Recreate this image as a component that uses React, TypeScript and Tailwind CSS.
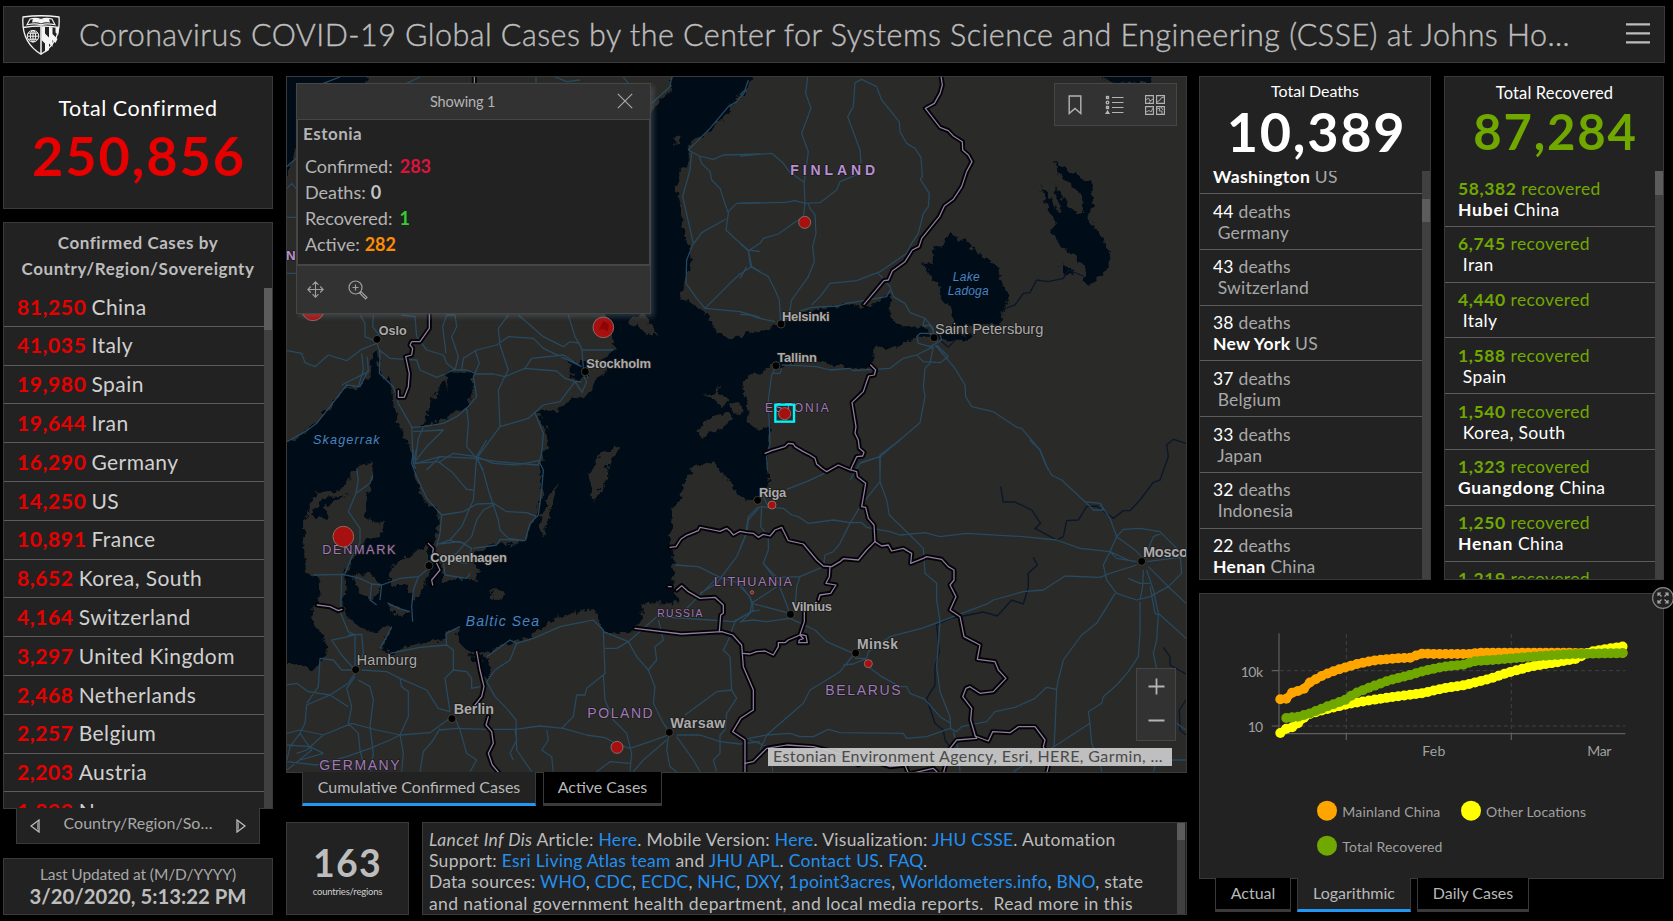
import type { ReactNode } from "react";

const PANEL = "box-border border border-[#3a3a3a] bg-[#222222]";

/* ---------- data ---------- */

const countries: [string, string][] = [
  ["81,250", "China"],
  ["41,035", "Italy"],
  ["19,980", "Spain"],
  ["19,644", "Iran"],
  ["16,290", "Germany"],
  ["14,250", "US"],
  ["10,891", "France"],
  ["8,652", "Korea, South"],
  ["4,164", "Switzerland"],
  ["3,297", "United Kingdom"],
  ["2,468", "Netherlands"],
  ["2,257", "Belgium"],
  ["2,203", "Austria"],
  ["1,899", "Norway"],
];

type Place = { n: string; region?: string; country: string };

const deaths: Place[] = [
  { n: "44", country: "Germany" },
  { n: "43", country: "Switzerland" },
  { n: "38", region: "New York", country: "US" },
  { n: "37", country: "Belgium" },
  { n: "33", country: "Japan" },
  { n: "32", country: "Indonesia" },
  { n: "22", region: "Henan", country: "China" },
];

const recovered: Place[] = [
  { n: "58,382", region: "Hubei", country: "China" },
  { n: "6,745", country: "Iran" },
  { n: "4,440", country: "Italy" },
  { n: "1,588", country: "Spain" },
  { n: "1,540", country: "Korea, South" },
  { n: "1,323", region: "Guangdong", country: "China" },
  { n: "1,250", region: "Henan", country: "China" },
  { n: "1,219", region: "Zhejiang", country: "China" },
];

/* ---------- header ---------- */

function Shield() {
  return (
    <svg className="h-10 w-[38px] shrink-0" viewBox="0 0 38 40">
      <path d="M1 2Q19-.5 37 2Q39 27 19 39.200Q-1 27 1 2Z" fill="#222" stroke="#f4f4f4" strokeWidth="1.300" />
      <path d="M1 12.500Q19 9.500 37 12.500" fill="none" stroke="#f4f4f4" strokeWidth="1.500" />
      <path d="M19 11.500V39" stroke="#f4f4f4" strokeWidth="1.500" />
      <path d="M8 4Q14 2.500 19 4.500Q24 2.500 30 4L33 9.800Q25 8 19 9.800Q13 8 5 9.800Z" fill="#222" stroke="#f4f4f4" strokeWidth="1.100" />
      <path d="M11 3.800Q16 3.300 19 4.800Q22 3.300 27 3.800L28 7.500Q23 6.500 19 8.500Q15 6.500 10 7.500Z" fill="#f4f4f4" />
      <g fill="none" stroke="#f4f4f4" strokeWidth="1">
        <circle cx="11" cy="21.200" r="5.800" />
        <ellipse cx="11" cy="21.200" rx="2.600" ry="5.800" />
        <path d="M11 15.400V27M5.200 21.200H16.800M6.200 18.200H15.800M6.200 24.200H15.800" />
      </g>
      <path
        d="M19.500 12H23V18.500L27 22.500V12L30.500 12.300V19L35.500 24L33.500 28L30.500 25V32L27 28.500V35L23 37.500V28.500L19.500 25Z"
        fill="#f4f4f4"
      />
      <path d="M33.500 12.500L36.800 13L36.300 20L33.500 17.500Z" fill="#f4f4f4" />
    </svg>
  );
}

function Header() {
  return (
    <header className={`${PANEL} flex h-[57px] w-[1662px] items-center pl-[18px] pr-[14px]`}>
      <Shield />
      <h1 className="-mt-px ml-[19px] w-[1500px] shrink-0 whitespace-nowrap text-[30.5px] font-light leading-[40px] tracking-[0.46px] text-[#bdbdbd] [-webkit-text-stroke:0.4px_#bdbdbd]">
        Coronavirus COVID-19 Global Cases by the Center for Systems Science and Engineering (CSSE) at Johns Ho…
      </h1>
      <svg className="-mt-[4px] ml-auto h-6 w-6 shrink-0" viewBox="0 0 24 24">
        <path d="M0 3.300H24M0 12.300H24M0 21.300H24" stroke="#bdbdbd" strokeWidth="2.300" />
      </svg>
    </header>
  );
}

/* ---------- left column ---------- */

function TotalConfirmed() {
  return (
    <section className={`${PANEL} flex h-[133px] flex-col items-center whitespace-nowrap`}>
      <div className="mt-[17px] text-[21.5px] leading-[28px] tracking-[0.55px] text-white">Total Confirmed</div>
      <div className="mt-[2px] pl-[2px] text-[54px] font-bold leading-[64px] tracking-[1.9px] text-[#e60000]">250,856</div>
    </section>
  );
}

function Scrollbar({ offset, thumb }: { offset: string; thumb: string }) {
  return (
    <div className="w-2 shrink-0 bg-[#404040]">
      <div className={`${offset} ${thumb} bg-[#5c5c5c]`} />
    </div>
  );
}

function CountryList() {
  return (
    <section className="flex h-[622px] flex-col items-center">
      <div className={`${PANEL} flex h-[587px] w-full flex-col`}>
        <div className="h-[65px] shrink-0 whitespace-nowrap pt-[7px] text-center text-[17px] font-bold leading-[26px] tracking-[0.55px] text-[#bdbdbd]">
          Confirmed Cases by
          <br />
          Country/Region/Sovereignty
        </div>
        <div className="flex min-h-0 flex-1">
          <ul className="min-w-0 flex-1 overflow-hidden">
            {countries.map(([n, name]) => (
              <li
                key={name}
                className="flex h-[38.8px] items-center gap-[5px] whitespace-nowrap border-b border-[#5c5c5c] pb-[1px] pl-[13px] text-[21px]"
              >
                <b className="font-bold tracking-[0.6px] text-[#e60000]">{n}</b>
                <span className="tracking-[0.45px] text-[#d0d0d0]">{name}</span>
              </li>
            ))}
          </ul>
          <Scrollbar offset="mt-0" thumb="h-[42px]" />
        </div>
      </div>
      <div className="-mt-px flex h-9 w-[244px] items-start justify-between border border-t-0 border-[#3a3a3a] bg-[#222222] px-[13px] pt-[5px]">
        <svg className="mt-[6px] h-[14px] w-[10px]" viewBox="0 0 10 14">
          <path d="M9 1V13L1 7Z" fill="none" stroke="#bdbdbd" strokeWidth="1.300" />
          <path d="M7.500 3.500V10.500" stroke="#8a8a8a" />
        </svg>
        <span className="text-base leading-[20px] text-[#a8a8a8]">Country/Region/So…</span>
        <svg className="mt-[6px] h-[14px] w-[10px]" viewBox="0 0 10 14">
          <path d="M1 1V13L9 7Z" fill="none" stroke="#bdbdbd" strokeWidth="1.300" />
          <path d="M2.500 3.500V10.500" stroke="#8a8a8a" />
        </svg>
      </div>
    </section>
  );
}

function LastUpdated() {
  return (
    <section className={`${PANEL} flex h-[57px] flex-col items-center whitespace-nowrap text-[#bdbdbd]`}>
      <div className="mt-[5px] text-[15.5px] leading-[20px] tracking-[-0.1px] text-[#a8a8a8]">Last Updated at (M/D/YYYY)</div>
      <div className="text-[20.3px] font-bold leading-[24px]">3/20/2020, 5:13:22 PM</div>
    </section>
  );
}

/* ---------- map ---------- */
/* The map is drawn at three units per pixel, in four tiles. */

const land = [
  "M262-30L255 40L200 100L48 235L21 320L-40 400L-40 1150L21 1118L75 1085L110 1060L150 1010L200 950L235 955L265 920L270 870L290 840L300 905L335 940L340 1000L355 1060L385 1130L400 1180L415 1250L440 1300L470 1320L480 1350L470 1400L460 1425L480 1490L490 1535L520 1530L560 1525L590 1530L600 1495L580 1480L590 1450L640 1420L700 1422L740 1410L755 1360L775 1335L785 1260L780 1170L805 1130L800 1085L770 1022L830 1022L880 985L905 985L940 950L960 915L985 900L965 875L1005 840L990 790L975 750L1000 650L1050 400L1115 130L1140 90L1175 60L1180-30Z",
  "M1430-30L1405 50L1370 90L1340 130L1290 180L1230 222L1222 245L1232 280L1200 300L1185 350L1205 410L1215 500L1232 570L1215 640L1200 690L1255 710L1290 740L1300 775L1350 812L1400 790L1450 785L1490 762L1530 750L1580 725L1660 710L1710 702L1750 715L1800 690L1830 672L1825 735L1860 765L1935 768L1960 800L1910 800L1860 825L1810 842L1785 825L1775 890L1750 895L1680 890L1620 872L1570 870L1520 890L1480 880L1450 900L1392 930L1390 960L1405 1010L1405 1060L1440 1085L1470 1065L1465 1150L1460 1190L1468 1250L1430 1285L1395 1290L1360 1260L1350 1230L1310 1195L1305 1170L1235 1195L1207 1245L1200 1290L1175 1320L1172 1410L1180 1450L1180 1530L1192 1600L1085 1600L1085 1650L1065 1680L1040 1690L970 1685L955 1650L945 1617L900 1622L830 1645L790 1670L750 1700L620 1745L570 1750L530 1710L540 1675L500 1680L490 1710L430 1718L380 1730L340 1750L300 1740L320 1700L338 1665L280 1690L240 1672L200 1640L190 1610L200 1560L195 1510L225 1460L250 1415L300 1400L310 1360L255 1350L257 1290L280 1220L275 1175L230 1195L180 1262L110 1270L85 1310L72 1370L74 1510L115 1525L120 1600L90 1630L110 1670L135 1710L140 1750L100 1800L70 1785L-40 1785V2160H2760V-30Z",
  "M330 1490L400 1450L440 1425L450 1500L435 1550L410 1590L375 1545L330 1545Z",
  "M215 1520L270 1510L305 1545L280 1590L235 1565Z",
  "M320 1600L395 1625L350 1640Z",
  "M835 1228L815 1270L778 1345L785 1402L808 1345Z",
  "M1020 1130L965 1150L925 1210L938 1298L960 1260L985 1220L980 1190Z",
  "M640 1550L670 1570L660 1590L635 1580Z",
  "M1262 973L1295 975L1308 948L1320 972L1345 985L1320 1012L1300 985Z",
  "M1250 1080L1290 1040L1345 1028L1360 1045L1320 1080L1265 1102Z",
  "M1352 1000L1382 1000L1385 1032L1358 1030Z",
  "M1276 1105L1258 1138L1268 1120Z",
  "M1045 745L1090 730L1110 760L1132 790L1105 795L1080 775L1050 765Z",
  "M1180 200L1205 195L1200 222L1182 220Z",
  "M405 1470L420 1480L410 1500Z",
];

const water = [
  "M497 905L580 905L578 960L565 1010L500 1045L430 1072L445 1000L470 970L493 930L508 975Z",
  "M865 870L920 880L925 920L880 930Z",
  "M2010 485L2040 510L2060 508L2090 550L2150 590L2165 640L2192 685L2168 720L2165 760L2020 770L2010 710L1985 690L1980 650L1955 620L1925 580L1958 585L1960 530L1985 533Z",
  "M1960 790L2075 795L2070 810L1965 808Z",
  "M2320 275L2370 300L2438 345L2438 395L2425 445L2465 500L2490 545L2488 590L2450 625L2430 648L2408 635L2415 590L2385 555L2340 525L2308 475L2335 465L2310 430L2295 380L2278 348L2300 370L2330 420L2345 425L2320 340L2350 385L2390 430L2410 425L2415 390L2385 350L2345 320Z",
  "M2345 585L2385 600L2375 615L2350 610Z",
  "M2445 10L2615 10L2615 38L2500 38Z",
  "M90 1330L130 1285L205 1275L150 1295L110 1345Z",
  "M120 1310L145 1330L140 1355L120 1340Z",
  "M565 1760L610 1755L635 1800L620 1830L600 1790Z",
];

const rivers = [
  "M2175 716L2205 705L2230 670L2250 668L2270 630L2305 635L2350 625L2365 600L2410 618",
  "M2718 1120L2680 1108L2660 1125L2665 1160L2640 1230L2620 1237L2580 1290L2550 1322L2530 1322L2500 1345L2450 1308L2420 1310L2395 1350L2360 1352L2350 1400L2330 1410L2265 1375L2282 1360L2255 1320L2205 1296L2170 1296L2162 1250",
  "M2260 1462L2272 1485L2245 1510L2245 1550L2230 1602L2195 1590L2152 1638L2110 1626L2050 1638L2010 1645L1970 1665L1978 1745L1965 1790L1965 1845L1940 1885L1965 1960L1990 1980L1995 2010L2030 2060",
  "M1980 810L2005 832L2030 805",
  "M2650 1732L2670 1760L2670 1785L2718 1812M2718 1890L2698 1920L2700 1980L2718 1995",
];

/* Roads, one path per tile. */
const roadsNW =
  "M21 442H50M21 610H50M21 842L65 850L75 878L105 890L145 855L200 872L245 838L290 820M240 735L255 760L255 800L290 815L300 850L298 910L340 950L355 1000L395 1070L400 1180L408 1198M280 735L278 770L300 800M365 735L405 740L410 800L440 840L490 855M490 855L500 880L525 900L535 860L515 800L530 770L525 735M525 735L500 735L488 770L498 850M298 840L330 865L410 870L420 900L470 922L495 912L520 900M520 900L560 900L590 912L640 912L675 920L735 895L830 903L855 925L885 935L905 965M545 900L550 865L590 840L650 825L685 800L760 805L790 835L905 890M685 735L655 775L660 825L685 900L672 925L655 960L660 1070L590 1165L480 1160L400 1182M585 840L598 880L580 920L590 980L560 1015L530 1040L490 1060L430 1070L395 1072M715 735L750 765L790 800L850 830L870 815L900 820M735 895L755 865L850 855L905 890M865 735L885 800L905 835L910 890M905 840H1000M560 1015L565 1060L560 1130L590 1165M660 1070L745 1045L790 1005L840 995L885 935L905 935M765 1030L790 1090L785 1150L775 1185L650 1175L590 1165M590 1165L610 1200M430 1072L415 1105L405 1180M400 1085L490 1080L440 1130L405 1175M480 1160L440 1200M185 945L265 905L262 860M245 850L250 900L235 950M130 40L180 21M380 40L420 21M768 21V40M825 21L860 35L900 30M1030 21L1045 40M1115 100L1170 50L1175 21M1225 240L1265 200L1290 175L1345 110L1370 95L1400 60M1225 240L1258 258L1300 268L1330 255L1440 252M1235 245L1230 300L1208 380L1240 520L1220 570L1218 640L1250 685L1275 715L1380 725L1440 742M1258 258L1265 280L1290 305L1295 330L1320 355L1345 430L1338 480L1370 510L1405 540L1415 590L1440 605M1440 398L1370 400L1345 425M1338 447L1265 488L1242 520M1415 590L1380 612L1350 640L1275 715M1405 540L1440 545M21 355L35 340L48 355M21 290L48 265M905 905L920 935L905 970M910 890L925 925M21 1115L75 1085L110 1060L150 1010L200 945L240 950L265 900";

const roadsNE =
  "M203 21L197 70L213 115L185 190L205 245L192 340L195 400M0 258L95 250L130 280L148 305L190 335M0 400L135 397L165 392L195 400L240 398L290 360L300 335L360 310M365 28L345 38L340 110L323 140L360 240L363 280M365 28L410 50L425 90L478 155L480 185L500 220L525 235L543 262L547 320L541 328L568 370L565 410L550 430L535 490L515 520L500 550L420 605L350 632L270 640L240 680L215 705M195 400L190 440L160 460L115 492L70 505L60 520L25 542L0 520M25 542L32 590L85 620L105 660L118 690L122 760M205 400L210 415L225 435L228 490L218 530L223 575L205 620L155 690L147 735L125 760M0 625L20 590M0 733L30 735L50 743L105 755M175 725L215 712L295 708L320 700L440 680L450 660M415 610L450 650L460 680L495 700L510 728L555 745L580 775L582 800M125 885L180 887L230 890L270 900L330 895L340 902L450 895L490 865L530 855L580 830M580 830L570 880L555 895L550 950L555 980L540 1058L420 1160L360 1178M420 1160V1200M585 825L620 865L645 895L675 945L677 980L695 1010L760 1025L830 1072L845 1075L900 1140L925 1200M530 855L550 875L600 878L625 860L590 825M530 800L535 820L570 830L605 810L600 795M530 800L540 790L585 790M550 768L570 765L580 785M108 890L95 915L85 990L90 1120L80 1160L82 1200M125 895L120 910L100 910M0 75L15 60L25 30M555 745L548 768";

const roadsSW =
  "M400 30L395 70L410 110L440 175L485 225L480 280L470 320M400 70L480 65L520 40L590 50L640 70L710 75L775 62M590 50L580 180L545 260L510 300L475 312M620 0L590 50L610 95L625 150L640 195L610 210L590 240L575 290L555 310L500 300M410 25L400 65M475 65L515 95L560 148L580 150M485 225L550 215L590 192L640 190L680 215L740 218L770 230M640 195L655 240L660 270L685 295L735 302M580 325L650 315L660 298L735 302L750 250L775 225L785 150L790 90L775 60M475 312L540 305L575 325L560 370L490 360M490 360L495 405L560 415L570 400M555 310L530 340L500 355M230 85L235 120L228 160L205 215L240 265L240 310L220 340L195 400M278 105L270 130L228 160M100 405L190 403L240 415L275 432L305 435L360 415L415 410L440 390M185 403L182 520L205 575L225 585L225 690M275 432L270 480L290 495M305 435L300 480M415 410L400 450L395 500L398 545M325 490L355 505L390 515M225 585L180 595L155 600L185 645L225 690M205 585L245 583L250 640L230 690M225 700L205 730L150 765L80 795L75 850L60 880L30 920L21 960M225 710L200 745L215 800L205 850L235 880L240 930L255 990M235 720L270 740L280 780L270 860L280 940L270 995M245 690L320 695L360 715L440 750L475 805L510 815M120 655L115 740L80 790M21 735L50 730L85 755L150 765L205 800M21 880L60 870L130 885L215 850L290 870L360 885L450 878L510 835M120 655L160 660L185 690L225 690M360 715L365 740L385 755L385 830L360 885L370 940L365 995M480 870L530 865L620 868L705 868L780 858L850 865L920 885L975 893L1010 912L1050 925L1110 905L1165 885M705 868L710 900L690 940L700 960M300 625L320 590L335 560M330 640L420 622L500 615L520 630L520 690L495 715L510 815M520 690L560 695L575 715L575 745L600 740M480 865L460 900L430 935L420 995M500 615L498 580L540 560M525 835L540 870L560 940L590 960L570 995M620 725L645 770L680 805L708 840L710 930L755 995M620 725L645 690L690 660L710 610L760 595L840 560L900 548L940 540L970 570L975 700L970 705L975 780L1000 840L1040 880L1055 940L1050 995M710 610L690 600L620 650M970 575L1045 605L1070 650L1105 690L1125 740L1120 790L1150 850L1165 870M970 705L920 745L915 765L890 765L880 830L845 865M1045 605L1130 530M975 625L1010 625L1045 605M1135 530L1290 540L1360 545L1415 515L1440 510M1135 540L1150 600L1125 620L1130 660L1105 690M1165 890L1160 930L1170 980L1190 995M1160 900L1090 960L1060 995M1190 890L1240 960L1260 995M1190 885H1260L1320 905L1380 912L1440 905M1215 825L1310 755L1355 750L1350 650L1330 630L1345 600L1365 545M1355 750L1370 775L1340 820L1335 870L1320 885L1320 940L1300 960L1310 995M800 870L805 900L785 930L815 950L820 995M950 995L990 965L1050 970M1185 375L1255 380L1315 410L1220 505M1440 200L1405 240L1400 280L1370 350L1310 430L1260 460M1315 410L1380 430L1415 480L1420 510L1365 545M60 880L95 930L21 990M21 965L110 975L200 950L270 925L330 900L360 885M130 885L80 930L50 940M21 915L90 920L130 940L60 960";

const roadsSE =
  "M85 200L65 160M65 200L62 260L85 290L85 330L70 370L115 430L150 520M55 200L25 230L15 290L0 325M60 200L130 205L155 225L175 230L205 250L280 240L330 248L365 248L380 262L450 275L480 285L555 278L600 290L680 280L850 290L950 300L1020 325L1110 335L1165 360M140 148L200 125L265 95M330 120L360 70L425 48M480 0L420 45V125L360 200L330 250L300 310L280 335L255 345L250 380L180 410L110 412L70 370M180 410L170 440L165 510M420 125L440 180L448 225L510 285L550 325L555 400L590 430L590 480L600 545L590 680L600 755L630 830L632 865M0 440L30 470L35 490L150 520M35 490L110 440M35 490L30 520L0 548M0 545L40 540L80 545L150 535L225 570L260 605L340 640M385 635L450 590L545 565L600 545L640 530L745 490L760 480L850 455L910 450L975 408L1080 412L1110 400L1190 375M340 645L300 695L210 750L190 790L80 885L60 930M345 655L375 655L385 680L425 710L480 740L500 740L510 760L555 778L600 830L632 850M310 675L340 672L380 655L385 635M0 900L80 885L150 880L180 890L220 890L265 868L300 878L490 880L500 895L560 890L630 865M28 900L100 925M630 865L650 875L665 860L740 845L765 815L825 802L885 775L920 742L950 748M1125 460L1070 550L1025 585L970 660L955 720L950 745L945 870L942 920L820 995M1200 485V580L1195 650L1165 695L1130 735L1090 770L1085 790L1045 815L1050 850L1055 910L1080 970L1085 995M942 920L1050 850M1230 440L1245 520L1255 525L1250 600L1240 640L1250 685M870 0L900 30L915 70L935 105L965 120L1035 185L1080 190L1110 235L1130 290L1185 330L1205 350M1035 185L1060 210L1090 210L1080 190M1130 290L1150 268L1200 265L1260 275L1320 335L1325 400L1285 440L1230 470L1190 480L1130 460L1100 420L1090 375L1110 335L1130 290M1215 350L1240 290L1265 280M1220 365L1338 350M1225 380L1285 440L1338 490M1210 390L1208 440L1200 480M1220 390L1240 450L1255 520L1338 595M1165 415L1200 430H1230M1190 365L1130 355L1110 335M1240 995L1250 960H1338M1310 850L1338 870M640 875L655 930L660 995M95 960L98 995";

const borders = [
  "M583 0V42M448 732L448 775L420 815L395 815L390 825L398 835L395 855L377 860L388 910L385 950L373 982H355V962",
  "M1983 18L1987 45L1980 70L1963 100L1936 115L1980 172L2005 182L2020 198L2047 215L2048 240L2065 255L2076 275L2060 305L2045 350L2020 388L1993 408L1978 440L1925 505L1917 530L1897 540L1875 575L1837 603L1825 630L1812 632L1752 703",
  "M1772 885L1787 900L1783 915L1766 918L1750 965L1716 998L1728 1070L1725 1090L1735 1110L1738 1135L1752 1147L1748 1158L1730 1160L1715 1192L1712 1200L1730 1205L1732 1220L1757 1240L1752 1270L1745 1310L1757 1312L1765 1345L1782 1365L1785 1415L1760 1440L1735 1470L1690 1466L1680 1475L1655 1490L1630 1488L1610 1470L1570 1422L1525 1412L1505 1372L1485 1380L1470 1398L1450 1393L1435 1402L1420 1390L1400 1388L1380 1384L1360 1395L1350 1383L1340 1375L1320 1384L1300 1380L1260 1372L1255 1382L1218 1397L1203 1407L1188 1430L1170 1432",
  "M1455 1150L1475 1142L1515 1130L1525 1120L1540 1122L1545 1130L1570 1145L1590 1155L1605 1165L1610 1182L1625 1195L1640 1205L1675 1185L1710 1200",
  "M1785 1415L1805 1428L1825 1425L1835 1443L1870 1435L1895 1450L1892 1480L1930 1465L1940 1460L1985 1468L2005 1490L2022 1500L2022 1530L2010 1545L2028 1580L2010 1620L2040 1640L2052 1700L2100 1725L2092 1768L2145 1775L2155 1800L2178 1825L2140 1865L2100 1870L2070 1850L2058 1855L2048 1880L2075 1915L2072 1950L2085 1995L2090 2005L2030 2010L2010 2035L1990 2110",
  "M2085 1998L2125 2013L2138 1985L2190 1988L2215 1970L2265 1970L2295 2010L2290 2030L2310 2070L2300 2110",
  "M1650 1490L1648 1520L1638 1540L1668 1545L1652 1570L1620 1575L1615 1590M1573 1625V1655L1560 1693L1578 1697L1582 1718H1556L1558 1710L1570 1706L1560 1695L1525 1710L1515 1718L1495 1718L1495 1730L1480 1755L1455 1743L1430 1745L1410 1752L1388 1750",
  "M1065 1675L1205 1692L1325 1685L1358 1695L1385 1725L1390 1790L1420 1860V1920L1382 1945L1358 1985L1395 2010L1395 2110",
  "M1190 1560L1205 1547L1225 1565L1260 1585L1305 1582L1330 1605V1630L1322 1635L1318 1685M1165 1550H1174",
  "M1395 2080L1420 2075L1440 2055L1460 2035L1520 2025L1600 2030L1640 2040L1690 2055L1735 2085L1750 2075L1800 2080L1830 2090L1875 2085L1885 2110M1895 2110L1960 2095L1975 2110",
  "M590 1745L600 1800L612 1850L605 1880L585 1905M625 1940L618 1965L635 1985L640 2020L625 2050L637 2085L658 2110",
  "M445 1420L460 1435L458 1450M470 1480L480 1500L455 1530L458 1545",
  "M112 1605L150 1610L175 1622L186 1618",
];

type Label = { t: string; x: number; y: number; w: number; s: number; k: "city" | "light" | "country" | "land" | "sea" };
const labels: Label[] = [
  { t: "Oslo", x: 296, y: 796, w: 84, s: 38, k: "city" },
  { t: "Stockholm", x: 919, y: 893, w: 194, s: 39, k: "city" },
  { t: "Helsinki", x: 1506, y: 752, w: 143, s: 39, k: "city" },
  { t: "Tallinn", x: 1492, y: 876, w: 119, s: 39, k: "city" },
  { t: "Saint Petersburg", x: 1965, y: 791, w: 325, s: 44, k: "light" },
  { t: "Riga", x: 1437, y: 1280, w: 82, s: 39, k: "city" },
  { t: "Vilnius", x: 1535, y: 1622, w: 121, s: 39, k: "city" },
  { t: "Minsk", x: 1731, y: 1736, w: 123, s: 42, k: "city" },
  { t: "Moscow", x: 2589, y: 1461, w: 168, s: 44, k: "city" },
  { t: "Copenhagen", x: 451, y: 1475, w: 230, s: 39, k: "city" },
  { t: "Hamburg", x: 230, y: 1785, w: 181, s: 43, k: "light" },
  { t: "Berlin", x: 521, y: 1933, w: 121, s: 43, k: "city" },
  { t: "Warsaw", x: 1171, y: 1974, w: 165, s: 43, k: "city" },
  { t: "FINLAND", x: 1531, y: 315, w: 254, s: 42, k: "land" },
  { t: "N", x: 18, y: 570, w: 28, s: 40, k: "land" },
  { t: "ESTONIA", x: 1455, y: 1026, w: 191, s: 36, k: "country" },
  { t: "DENMARK", x: 127, y: 1452, w: 219, s: 38, k: "country" },
  { t: "LITHUANIA", x: 1302, y: 1547, w: 234, s: 38, k: "country" },
  { t: "RUSSIA", x: 1132, y: 1641, w: 135, s: 31, k: "country" },
  { t: "POLAND", x: 922, y: 1943, w: 196, s: 42, k: "country" },
  { t: "BELARUS", x: 1636, y: 1875, w: 226, s: 42, k: "country" },
  { t: "GERMANY", x: 118, y: 2101, w: 241, s: 42, k: "country" },
  { t: "Skagerrak", x: 99, y: 1121, w: 200, s: 38, k: "sea" },
  { t: "Baltic Sea", x: 557, y: 1667, w: 220, s: 42, k: "sea" },
  { t: "Lake", x: 2018, y: 633, w: 81, s: 36, k: "sea" },
  { t: "Ladoga", x: 2003, y: 675, w: 123, s: 36, k: "sea" },
];
const labelClass = {
  city: "fill-[#ababab] font-bold",
  light: "fill-[#ababab]",
  country: "fill-[#a179b8]",
  land: "fill-[#b98fd6] font-bold",
  sea: "fill-[#4a83c0] italic",
};

const cities: [number, number][] = [
  [291, 808], [916, 905], [1503, 762], [1488, 887], [1962, 803], [1433, 1291], [1531, 1633],
  [1727, 1749], [2585, 1474], [447, 1487], [227, 1799], [516, 1946], [1168, 1987],
];
const cases: [number, number, number][] = [
  [99, 718, 34], [970, 772, 31], [190, 1400, 31], [1574, 457, 18], [1514, 1031, 18],
  [1476, 1305, 12], [1416, 1567, 5], [1765, 1781, 12], [1011, 2032, 18],
];

function BaseMap() {
  return (
    <svg className="block h-full w-full bg-[#000c17]" viewBox="21 21 2697 2085" preserveAspectRatio="none">
      <defs>
        <filter id="coast" x="-5%" y="-5%" width="110%" height="110%" colorInterpolationFilters="sRGB">
          <feTurbulence type="fractalNoise" baseFrequency="0.05" numOctaves="3" seed="4" />
          <feDisplacementMap in="SourceGraphic" scale="28" xChannelSelector="R" yChannelSelector="G" />
        </filter>
      </defs>
      <g filter="url(#coast)">
        {land.map((d) => <path key={d} d={d} fill="#2a2a28" />)}
        {water.map((d) => <path key={d} d={d} fill="#000c17" />)}
      </g>
      <g fill="none" stroke="#0a172b" strokeWidth="4">
        {rivers.map((d) => <path key={d} d={d} />)}
      </g>
      <g fill="none" stroke="#274a61" strokeWidth="3.800" strokeLinejoin="round">
        <path d={roadsNW} />
        <path d={roadsNE} transform="translate(1380 0)" />
        <path d={roadsSW} transform="translate(0 1110)" />
        <path d={roadsSE} transform="translate(1380 1110)" />
      </g>
      <g fill="none" strokeLinejoin="round" strokeLinecap="round">
        {borders.map((d) => <path key={d} d={d} stroke="#030303" strokeWidth="15" />)}
        {borders.map((d) => <path key={d} d={d} stroke="#917ca6" strokeWidth="3.800" />)}
      </g>
      {cities.map(([x, y]) => (
        <circle key={x} cx={x} cy={y} r="12" fill="#000" stroke="#55554a" strokeWidth="2" />
      ))}
      <g className="font-['Liberation_Sans',sans-serif]" stroke="#1c1c1c" strokeWidth="5" paintOrder="stroke" strokeLinejoin="round">
        {labels.map((l) => (
          <text
            key={l.t}
            x={l.x}
            y={l.y}
            textLength={l.w}
            fontSize={l.s}
            className={labelClass[l.k]}
            stroke={l.k === "sea" ? "none" : undefined}
          >
            {l.t}
          </text>
        ))}
      </g>
      {cases.map(([x, y, r]) => (
        <circle key={x} cx={x} cy={y} r={r} fill="#a80f0f" stroke="#8b6a66" strokeWidth="3" />
      ))}
      <path d="M970 754L986 762L984 784L966 776L956 780Z" fill="#8d0505" />
      <rect x="1486" y="1004" width="56" height="51" fill="none" stroke="#00f4fa" strokeWidth="7" />
    </svg>
  );
}

function Popup() {
  const rows: [string, string, string, string][] = [
    ["Confirmed:", "283", "text-[#dc143c]", "gap-[7px]"],
    ["Deaths:", "0", "text-[#c4c4c4]", "gap-[5px]"],
    ["Recovered:", "1", "text-[#32cd32]", "gap-[7px]"],
    ["Active:", "282", "text-[#ff8c00]", "gap-[5px]"],
  ];
  return (
    <div className="absolute left-[9px] top-[6px] flex h-[231px] w-[355px] flex-col border border-[#464646] bg-[#323232] shadow-[3px_3px_5px_rgba(110,120,130,0.35)]">
      <div className="relative flex h-[35px] shrink-0 items-center pl-[133px] text-[14.5px] tracking-[-0.15px] text-[#b4b4b4]">
        Showing 1
        <svg className="absolute left-[320px] top-[9px] h-4 w-4" viewBox="0 0 16 16">
          <path d="M.8.8L15.200 15.200M15.200.8L.8 15.200" stroke="#a8a8a8" strokeWidth="1.200" />
        </svg>
      </div>
      <div className="h-[147px] shrink-0 border border-b-2 border-[#464646] bg-[#222222] text-[#b4b4b4]">
        <div className="pl-[5px] pt-[2px] text-[17px] font-bold leading-[24px] tracking-[0.5px]">Estonia</div>
        <div className="mt-[7px] pl-[7px] text-[18px] leading-[26px]">
          {rows.map(([k, v, c, g]) => (
            <div key={k} className={`flex ${g} whitespace-nowrap`}>
              <span>{k}</span>
              <b className={`font-bold ${c}`}>{v}</b>
            </div>
          ))}
        </div>
      </div>
      <div className="flex flex-1 items-center pl-[10px]">
        <svg className="h-[17px] w-[17px]" viewBox="0 0 17 17" fill="none" stroke="#a0a0a0" strokeWidth="1.100">
          <path d="M8.500.8V16.200M.8 8.500H16.200M5.500 3.800L8.500.8L11.500 3.800M5.500 13.200L8.500 16.200L11.500 13.200M3.800 5.500L.8 8.500L3.800 11.500M13.200 5.500L16.200 8.500L13.200 11.500" />
        </svg>
        <svg className="ml-6 h-5 w-5" viewBox="0 0 20 20" fill="none" stroke="#a0a0a0" strokeWidth="1.200">
          <circle cx="7.500" cy="7.500" r="6.500" />
          <path d="M7.500 4.500V10.500M4.500 7.500H10.500M11.800 13.200L13.200 11.800L19 17.500L17.500 19Z" />
        </svg>
      </div>
    </div>
  );
}

function MapTools() {
  return (
    <div className="absolute right-[9px] top-[6px] flex h-[43px] w-[123px] items-center border border-[#464646] bg-[#323232] pl-[13px] text-[#b4b4b4]">
      <svg className="h-5 w-[14px]" viewBox="0 0 14 20">
        <path d="M1.200 1H12.800V18.500L7 13.500L1.200 18.500Z" fill="none" stroke="currentColor" strokeWidth="1.400" />
      </svg>
      <svg className="ml-[23px] h-5 w-[19px]" viewBox="0 0 19 20" fill="none" stroke="currentColor">
        <path d="M7 2.500H18.500M7 7.500H18.500M7 12.500H18.500M7 17.500H18.500" strokeWidth="1.200" />
        <rect x="1.500" y="1.500" width="2" height="2" strokeWidth="1.300" />
        <circle cx="2.500" cy="7.500" r="1.300" strokeWidth="1.300" />
        <rect x="1.500" y="11.500" width="2" height="2" strokeWidth="1.300" />
        <path d="M2.500 16L1 18.500H4Z" strokeWidth="1.200" />
      </svg>
      <svg className="ml-[21px] h-5 w-5" viewBox="0 0 20 20" fill="none" stroke="currentColor" strokeWidth="1.100">
        <path d="M.6.6H8.400V8.400H.6ZM11.600.6H19.400V8.400H11.600ZM.6 11.600H8.400V19.400H.6ZM11.600 11.600H19.400V19.400H11.600Z" />
        <path d="M1 5L3.500 3L5 6L8 4M4 8L6 5M12 7L15 5L16 3L19 2M1 17L4 15.500L6 17L8 13M12 14L15 13L14 16L17 16V19M16 12L18 15" strokeWidth=".9" />
      </svg>
    </div>
  );
}

function ZoomTools() {
  return (
    <div className="absolute bottom-[31px] right-[10px] flex h-[73px] w-[40px] justify-center border border-[#464646] bg-[#323232]">
      <svg className="h-full w-[17px]" viewBox="0 0 17 71">
        <path d="M.5 17.500H16.500M8.500 9.500V25.500M.5 51.500H16.500" stroke="#b4b4b4" strokeWidth="1.800" />
      </svg>
    </div>
  );
}

function Tab({ active, width, children }: { active?: boolean; width: string; children: ReactNode }) {
  return (
    <div
      className={`${width} h-[34px] whitespace-nowrap border border-t-0 border-b-[3px] pt-[4px] text-center text-base leading-[22px] text-[#b8b8b8] ${
        active ? "border-x-[#3a3a3a] border-b-[#2196f3] bg-[#222222]" : "border-[#3a3a3a] bg-black"
      }`}
    >
      {children}
    </div>
  );
}

function MapPanel() {
  return (
    <section className="h-[731px]">
      <div className="relative h-[697px] w-[901px] overflow-hidden border border-[#3a3a3a]">
        <BaseMap />
        <Popup />
        <MapTools />
        <ZoomTools />
        <div className="absolute bottom-[6px] right-[14px] h-[18px] w-[404px] whitespace-nowrap bg-[#cfcfcf]/90 pl-[5px] text-base leading-[16px] tracking-[0.4px] text-[#4a4a4a]">
          Estonian Environment Agency, Esri, HERE, Garmin, …
        </div>
      </div>
      <div className="relative -mt-px flex gap-[7px] pl-[16px]">
        <Tab active width="w-[234px]">Cumulative Confirmed Cases</Tab>
        <Tab width="w-[119px]">Active Cases</Tab>
      </div>
    </section>
  );
}

function CountriesCount() {
  return (
    <section className={`${PANEL} flex h-[93px] w-[123px] flex-col items-center text-[#bdbdbd]`}>
      <div className="mt-[19px] text-[37.5px] font-bold leading-[42px] tracking-[1.2px]">163</div>
      <div className="mt-px text-[9.5px] leading-[14px] tracking-[-0.2px] text-[#d0d0d0]">countries/regions</div>
    </section>
  );
}

function A({ children }: { children: ReactNode }) {
  return <span className="text-[#2390f0]">{children}</span>;
}

function Notes() {
  return (
    <section className={`${PANEL} flex h-[93px] w-[765px] overflow-hidden pr-px`}>
      <div className="min-w-0 flex-1 whitespace-pre pl-[6px] pt-[6px] text-[17.5px] leading-[21.200px] text-[#bdbdbd]">
        <div className="tracking-[0.3px]">
          <i>Lancet Inf Dis</i> Article: <A>Here</A>. Mobile Version: <A>Here</A>. Visualization: <A>JHU CSSE</A>. Automation
        </div>
        <div className="tracking-[0.28px]">
          Support: <A>Esri Living Atlas team</A> and <A>JHU APL</A>. <A>Contact US</A>. <A>FAQ</A>.
        </div>
        <div className="tracking-[0.22px]">
          Data sources: <A>WHO</A>, <A>CDC</A>, <A>ECDC</A>, <A>NHC</A>, <A>DXY</A>, <A>1point3acres</A>, <A>Worldometers.info</A>, <A>BNO</A>, state
        </div>
        <div className="tracking-[0.39px]">and national government health department, and local media reports.  Read more in this</div>
      </div>
      <Scrollbar offset="mt-0" thumb="h-[17px]" />
    </section>
  );
}

/* ---------- right column ---------- */

function Deaths() {
  return (
    <section className={`${PANEL} flex h-[504px] w-[232px] flex-col whitespace-nowrap`}>
      <div className="h-[94px] shrink-0 text-center text-white">
        <div className="pt-[3px] text-[16px] leading-[22px]">Total Deaths</div>
        <div className="pl-[3px] text-[54px] font-bold leading-[60px] tracking-[1.7px]">10,389</div>
      </div>
      <div className="flex min-h-0 flex-1 text-[17.5px] leading-[21px] tracking-[0.2px] text-[#a8a8a8]">
        <ul className="flex min-w-0 flex-1 flex-col overflow-hidden">
          <li className="flex h-[23px] shrink-0 items-end border-b border-[#5c5c5c] pb-[6px] pl-[13px]">
            <span>
              <b className="tracking-[0.35px] text-white">Washington</b> US
            </span>
          </li>
          {deaths.map((d) => (
            <li key={d.n} className="h-[55.8px] shrink-0 border-b border-[#5c5c5c] pl-[13px] pt-[6.5px]">
              <div>
                <span className="text-white">{d.n}</span> deaths
              </div>
              <div className="whitespace-pre">
                <b className="tracking-[0.3px] text-white">{d.region}</b> {d.country}
              </div>
            </li>
          ))}
        </ul>
        <Scrollbar offset="mt-[28px]" thumb="h-[23px]" />
      </div>
    </section>
  );
}

function Recovered() {
  return (
    <section className={`${PANEL} flex h-[504px] w-[220px] flex-col whitespace-nowrap`}>
      <div className="h-[94px] shrink-0 text-center">
        <div className="pl-px pt-[5px] text-[16.5px] leading-[22px] tracking-[0.15px] text-white">Total Recovered</div>
        <div className="pl-[3px] text-[49px] font-bold leading-[55px] tracking-[1.8px] text-[#70a800]">87,284</div>
      </div>
      <div className="flex min-h-0 flex-1 text-[17.5px] leading-[21px] tracking-[0.35px]">
        <ul className="min-w-0 flex-1 overflow-hidden">
          {recovered.map((d) => (
            <li key={d.n} className="h-[55.8px] border-b border-[#5c5c5c] pl-[13px] pt-[6.5px]">
              <div className="text-[#70a800]">
                <b className="tracking-[0.6px]">{d.n}</b> recovered
              </div>
              <div className="whitespace-pre text-white">
                <b className="tracking-[0.8px]">{d.region}</b> {d.country}
              </div>
            </li>
          ))}
        </ul>
        <Scrollbar offset="mt-0" thumb="h-6" />
      </div>
    </section>
  );
}

type Pt = [number, number];
const china: Pt[] = [[271, 358], [289, 356], [306, 338], [340, 328], [360, 307], [400, 285], [440, 270], [500, 252], [560, 240], [620, 235], [665, 233], [690, 221], [750, 222], [840, 222], [870, 218], [1300, 219]];
const other: Pt[] = [[271, 459], [289, 446], [310, 441], [330, 425], [350, 405], [400, 390], [470, 373], [520, 364], [600, 352], [700, 339], [760, 325], [820, 316], [900, 296], [960, 276], [1030, 258], [1100, 247], [1160, 236], [1200, 215], [1300, 199]];
const healed: Pt[] = [[289, 414], [325, 410], [360, 400], [410, 380], [470, 358], [490, 342], [540, 322], [600, 300], [650, 288], [700, 273], [760, 260], [820, 254], [850, 244], [920, 239], [1000, 232], [1080, 226], [1150, 222], [1300, 219]];

function daily(pts: Pt[]): Pt[] {
  const out: Pt[] = [];
  for (let i = 0; i < 59; i++) {
    const x = 271 + i * 17.7;
    if (x < pts[0][0] - 1) continue;
    let j = 0;
    while (j < pts.length - 2 && pts[j + 1][0] < x) j++;
    const [x0, y0] = pts[j];
    const [x1, y1] = pts[j + 1];
    out.push([x, y0 + ((y1 - y0) * (x - x0)) / (x1 - x0)]);
  }
  return out;
}

function Chart() {
  const series: [string, Pt[]][] = [
    ["#ffa500", daily(china)],
    ["#ffff00", daily(other)],
    ["#70a800", daily(healed)],
  ];
  return (
    <svg className="block h-[284px] w-[463px]" viewBox="30 42 1389 852">
      <g stroke="#404040" strokeWidth="3" strokeDasharray="12 9">
        <path d="M270 272H1306M270 438H1306M469 162V460M964 162V460" fill="none" />
      </g>
      <path d="M267 160V461H1306M245 272H267M245 438H267M469 461V480M964 461V480" fill="none" stroke="#606060" strokeWidth="3.500" />
      {series.map(([c, pts]) => (
        <g key={c}>
          <polyline points={pts.map((p) => p.join(",")).join(" ")} fill="none" stroke={c} strokeWidth="24" />
          {pts.map(([x, y]) => <circle key={x} cx={x} cy={y} r="15" fill={c} />)}
        </g>
      ))}
      <g fill="#a0a0a0" fontSize="42">
        <text x="152" y="290" textLength="67">10k</text>
        <text x="173" y="456" textLength="46">10</text>
        <text x="697" y="528" textLength="69">Feb</text>
        <text x="1192" y="528" textLength="72">Mar</text>
        <circle cx="411" cy="692" r="30" fill="#ffa500" />
        <text x="457" y="711" textLength="294">Mainland China</text>
        <circle cx="843" cy="692" r="30" fill="#ffff00" />
        <text x="888" y="711" textLength="300">Other Locations</text>
        <circle cx="411" cy="797" r="30" fill="#70a800" />
        <text x="457" y="816" textLength="300">Total Recovered</text>
      </g>
    </svg>
  );
}

function ChartPanel() {
  return (
    <section>
      <div className={`${PANEL} relative h-[286px] w-[465px]`}>
        <Chart />
        <svg className="absolute -right-[11px] -top-[7px] h-[22px] w-[22px]" viewBox="0 0 22 22" fill="none" stroke="#a8a8a8" strokeWidth="1.200">
          <circle cx="11" cy="11" r="10.400" fill="#222" stroke="#858585" />
          <path d="M6 9V6H9M6 6L9.500 9.500M13 6H16V9M16 6L12.500 9.500M6 13V16H9M6 16L9.500 12.500M16 13V16H13M16 16L12.500 12.500" />
        </svg>
      </div>
      <div className="relative -mt-px flex gap-[6px] pl-[16px]">
        <Tab width="w-[76px]">Actual</Tab>
        <Tab active width="w-[114px]">Logarithmic</Tab>
        <Tab width="w-[112px]">Daily Cases</Tab>
      </div>
    </section>
  );
}

export default function App() {
  return (
    <div className="h-[921px] w-[1673px] overflow-hidden bg-black pl-[3px] pt-[6px] font-[Lato,sans-serif]">
      <Header />
      <main className="mt-[13px] flex gap-[13px]">
        <div className="flex w-[270px] flex-col">
          <TotalConfirmed />
          <div className="mt-[13px]">
            <CountryList />
          </div>
          <div className="mt-[14px]">
            <LastUpdated />
          </div>
        </div>
        <div className="flex w-[901px] flex-col gap-[15px]">
          <MapPanel />
          <div className="flex gap-[13px]">
            <CountriesCount />
            <Notes />
          </div>
        </div>
        <div className="-ml-px flex flex-col gap-[13px]">
          <div className="flex gap-[13px]">
            <Deaths />
            <Recovered />
          </div>
          <ChartPanel />
        </div>
      </main>
    </div>
  );
}
